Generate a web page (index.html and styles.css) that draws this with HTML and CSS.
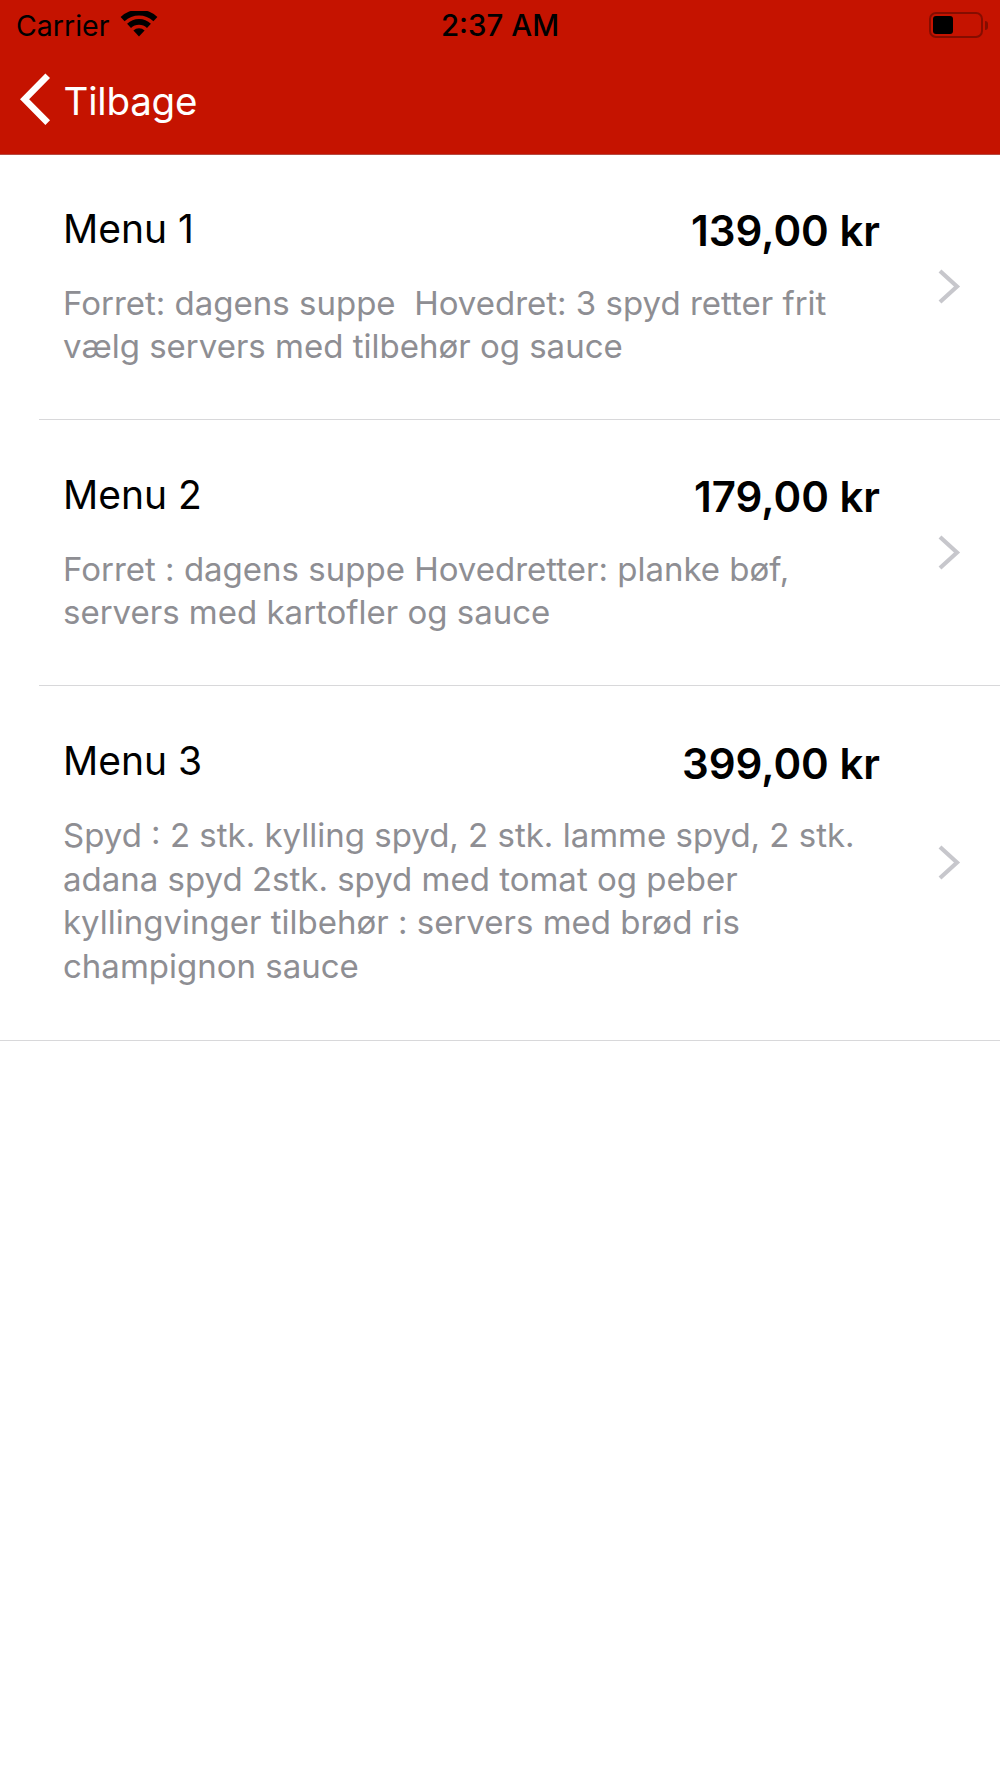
FILE: index.html
```html
<!DOCTYPE html>
<html lang="da">
<head>
<meta charset="utf-8">
<title>Menu</title>
<link rel="stylesheet" href="styles.css">
</head>
<body>
<header class="topbar">
  <div class="status">
    <div class="status-left">
      <span class="carrier">Carrier</span>
      <svg class="wifi" width="38" height="26" viewBox="0 0 38 26"><path d="M19 25.500l-5.600-6a8 8 0 0 1 11.200 0z" fill="#000"/><path d="M11 17l-3.900-4.200a17.200 17.200 0 0 1 23.800 0L27 17a11.600 11.600 0 0 0-16 0z" fill="#000"/><path d="M4.600 10.200L.6 6a26.800 26.800 0 0 1 36.800 0l-4 4.200a21 21 0 0 0-28.800 0z" fill="#000"/></svg>
    </div>
    <span class="clock">2:37 AM</span>
    <div class="battery">
      <div class="battery-body"><div class="battery-fill"></div></div>
      <div class="battery-tip"></div>
    </div>
  </div>
  <nav class="nav">
    <svg class="back" width="32" height="52" viewBox="0 0 32 52"><path d="M27.700 .8L4.600 24.200 27.700 47.600" fill="none" stroke="#fff" stroke-width="6.500"/></svg>
    <span class="back-label">Tilbage</span>
  </nav>
</header>
<main class="list">
  <section class="row row-inset">
    <div class="row-main">
      <div class="row-head"><span class="name">Menu 1</span><span class="price">139,00 kr</span></div>
      <p class="desc">Forret: dagens suppe&nbsp; Hovedret: 3 spyd retter frit vælg servers med tilbehør og sauce</p>
    </div>
    <svg class="chev" width="24" height="36" viewBox="0 0 24 36"><path d="M3 3l17 15.500L3 34" fill="none" stroke="#c7c7cc" stroke-width="4.200"/></svg>
  </section>
  <section class="row row-inset">
    <div class="row-main">
      <div class="row-head"><span class="name">Menu 2</span><span class="price">179,00 kr</span></div>
      <p class="desc">Forret : dagens suppe Hovedretter: planke bøf, servers med kartofler og sauce</p>
    </div>
    <svg class="chev" width="24" height="36" viewBox="0 0 24 36"><path d="M3 3l17 15.500L3 34" fill="none" stroke="#c7c7cc" stroke-width="4.200"/></svg>
  </section>
  <section class="row">
    <div class="row-main">
      <div class="row-head"><span class="name">Menu 3</span><span class="price">399,00 kr</span></div>
      <p class="desc">Spyd : 2 stk. kylling spyd, 2 stk. lamme spyd, 2 stk. adana spyd 2stk. spyd med tomat og peber kyllingvinger tilbehør : servers med brød ris champignon sauce</p>
    </div>
    <svg class="chev" width="24" height="36" viewBox="0 0 24 36"><path d="M3 3l17 15.500L3 34" fill="none" stroke="#c7c7cc" stroke-width="4.200"/></svg>
  </section>
</main>
</body>
</html>
```
FILE: styles.css
```css
* { box-sizing: border-box; }
html, body { margin: 0; padding: 0; background: #fff; }
body { width: 1000px; min-height: 1778px; font-family: Inter, "Liberation Sans", sans-serif; }

.topbar { background: #c51300; height: 155px; border-bottom: 1px solid #b54a42; }
.status { height: 54px; display: grid; grid-template-columns: 1fr auto 1fr; align-items: center; padding: 0 16px 2px; color: #000; }
.status-left { display: flex; align-items: center; gap: 11px; }
.carrier { font-size: 28.500px; line-height: 32px; }
.wifi { display: block; margin-top: -5px; }
.clock { font-size: 29.500px; font-weight: 500; line-height: 32px; margin-top: -2px; }
.battery { justify-self: end; display: flex; align-items: center; gap: 2px; margin: -2px -4px 0 0; }
.battery-body { width: 54px; height: 26px; border: 2px solid #850d00; border-radius: 7px; padding: 2px; }
.battery-fill { width: 20px; height: 18px; background: #000; border-radius: 3px; }
.battery-tip { width: 3px; height: 9px; background: #850d00; border-radius: 0 3px 3px 0; }

.nav { height: 93px; display: flex; align-items: center; padding: 0 0 0 20px; gap: 11.500px; }
.back { display: block; overflow: visible; }
.back-label { color: #fff; font-size: 38.500px; line-height: 46px; letter-spacing: -0.200px; }

.list { margin-top: -1px; }
.row { display: flex; align-items: center; padding: 53px 39px 50.900px 63px; border-bottom: 1px solid #d8d8da; position: relative; }
.row-inset { border-bottom: 0; }
.row-inset::after { content: ""; position: absolute; left: 39px; right: 0; bottom: 0; height: 1px; background: #d8d8da; }
.row-main { flex: 1; min-width: 0; }
.row-head { display: flex; justify-content: space-between; align-items: flex-start; padding-right: 57px; margin-bottom: 28.200px; }
.name { font-size: 39px; line-height: 44px; color: #000; }
.price { font-size: 42px; line-height: 44px; font-weight: 600; color: #000; margin-top: 2.400px; }
.desc { margin: 0; font-size: 33px; line-height: 43.800px; color: #8e8e93; width: 810px; }
.chev { display: block; flex: none; margin-top: -4px; }
```
